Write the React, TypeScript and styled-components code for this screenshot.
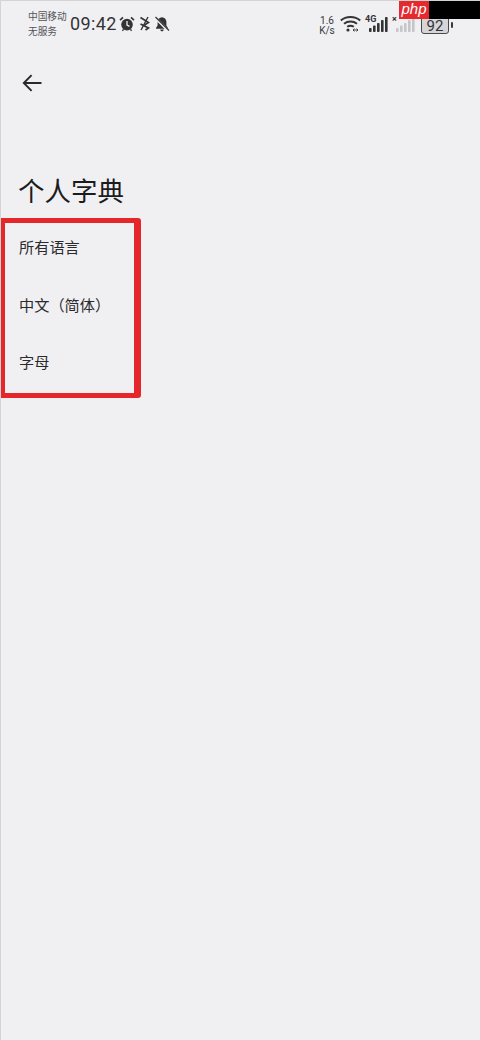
import React from "react";
import styled, { createGlobalStyle } from "styled-components";

const Global = createGlobalStyle`
  html, body { margin: 0; padding: 0; background: #f0f0f3; }
  body { font-family: "Noto Sans CJK SC", "Noto Sans", sans-serif; }
`;

const Page = styled.div`
  position: relative;
  width: 480px;
  height: 1040px;
  box-sizing: border-box;
  background: #f0f0f3;
  border-top: 1px solid #d4d4d6;
  border-left: 1px solid #d4d4d6;
  overflow: hidden;
`;

const StatusBar = styled.div`
  height: 47px;
  display: flex;
  align-items: flex-start;
  padding: 8px 0 0 27px;
  box-sizing: border-box;
  color: #3a3a3c;
`;

const Carrier = styled.div`
  width: 42px;
  font-size: 9.7px;
  line-height: 14.5px;
  color: #55555a;
  white-space: nowrap;
`;

const Clock = styled.div`
  margin-left: 0;
  font-family: "Roboto", sans-serif;
  font-size: 18px;
  line-height: 29px;
  letter-spacing: 0.4px;
  color: #333336;
`;

const LeftIcons = styled.div`
  display: flex;
  align-items: center;
  gap: 4px;
  height: 29px;
  margin-left: 2px;
`;

const RightIcons = styled.div`
  margin-left: auto;
  display: flex;
  align-items: flex-start;
  height: 29px;
  padding: 6px 31px 0 0;
  box-sizing: border-box;
`;

const Speed = styled.div`
  width: 18px;
  margin: 1px 4px 0 0;
  font-family: "Roboto", sans-serif;
  font-size: 10px;
  line-height: 10px;
  text-align: center;
  color: #3a3a3c;
`;

const NetLabel = styled.span`
  position: absolute;
  left: 0;
  top: 0;
  font-family: "Roboto", sans-serif;
  font-size: 9px;
  font-weight: 700;
  line-height: 9px;
  color: #333336;
`;

const Signal = styled.div`
  position: relative;
  width: 23px;
  height: 17px;
  margin-left: 4px;
`;

const BarsSlot = styled.div`
  position: absolute;
  right: 0;
  bottom: 0;
  height: 15px;
`;

const Battery = styled.div`
  position: relative;
  width: 28px;
  height: 19px;
  margin: 0 0 0 6px;
  box-sizing: border-box;
  background: #d6d6d8;
  border: 1.5px solid #4a4a4c;
  border-radius: 3px;
  font-family: "Roboto", sans-serif;
  font-size: 15px;
  line-height: 20px;
  text-align: center;
  color: #333336;
  &::after {
    content: "";
    position: absolute;
    right: -5px;
    top: 6px;
    width: 2px;
    height: 6px;
    border-radius: 1px;
    background: #3a3a3c;
  }
`;

const Watermark = styled.div`
  position: absolute;
  top: -1px;
  right: 0;
  display: flex;
  height: 19px;
`;

const PhpTag = styled.div`
  width: 30px;
  background: #e52a2e;
  color: #fff;
  font-family: "Liberation Sans", sans-serif;
  font-style: italic;
  font-size: 15px;
  line-height: 18px;
  text-align: center;
`;

const BlackTag = styled.div`
  width: 51px;
  background: #000;
`;

const BackRow = styled.div`
  height: 46px;
  display: flex;
  align-items: center;
  padding: 12px 0 0 21px;
`;

const Title = styled.h1`
  margin: 65px 0 0 17px;
  font-size: 26.5px;
  font-weight: 400;
  line-height: 38px;
  color: #1c1c1e;
`;

const Highlight = styled.div`
  width: 141px;
  height: 180px;
  margin-top: 9px;
  margin-left: -1px;
  box-sizing: border-box;
  border: 5px solid #e5262b;
  border-right-width: 7px;
  border-radius: 0 3px 3px 0;
  display: flex;
  flex-direction: column;
  gap: 39.5px;
  padding: 14px 0 0 14px;
`;

const Item = styled.div`
  font-size: 15.2px;
  line-height: 18px;
  color: #2a2a2c;
  white-space: nowrap;
`;

const AlarmIcon = () => (
  <svg width="16" height="16" viewBox="0 0 16 16" fill="#333336">
    <circle cx="8" cy="8.6" r="5.8" />
    <path d="M8 5v4l2.5 1.4" stroke="#f0f0f3" strokeWidth="1.3" fill="none" />
    <path d="M1 4.2 4 1.4M15 4.2 12 1.4" stroke="#333336" strokeWidth="1.6" />
    <path d="M3.4 14.8 4.6 13.4M12.6 14.8 11.4 13.4" stroke="#333336" strokeWidth="1.4" />
  </svg>
);

const BluetoothIcon = () => (
  <svg width="11" height="15" viewBox="0 0 11 15" fill="none" stroke="#333336" strokeWidth="1.7">
    <path d="M1.5 1.5 9.5 6.5 5.5 9M1.5 8l8 4-3 2" />
    <path d="M9 1 2 14" strokeWidth="1.4" />
  </svg>
);

const MutedBellIcon = () => (
  <svg width="16" height="16" viewBox="0 0 16 16" fill="#333336">
    <path d="M8 1.2c-2.8 0-4.4 2.2-4.4 4.8v3.4L2 12v.8h12V12l-1.6-2.6V6c0-2.6-1.6-4.8-4.4-4.8z" />
    <path d="M6.2 13.6h3.6a1.8 1.8 0 0 1-3.6 0z" />
    <path d="M1.5 2 14 14.5" stroke="#f0f0f3" strokeWidth="2.6" />
    <path d="M1.5 1 15 14.5" stroke="#333336" strokeWidth="1.3" />
  </svg>
);

const WifiIcon = () => (
  <svg width="21" height="17" viewBox="0 0 21 17" fill="none" stroke="#333336" strokeWidth="2">
    <path d="M.8 5.5C6 .8 15 .8 20.2 5.5" />
    <path d="M4 8.8c3.8-3 9.2-3 13 0" />
    <path d="M7.2 11.8c2-1.4 4.6-1.4 6.6 0" />
    <circle cx="8" cy="15" r="1.6" fill="#333336" stroke="none" />
    <path d="M13 15h5M14.5 13.6 13 15l1.5 1.4M16.5 13.6 18 15l-1.5 1.4" strokeWidth="0.9" />
  </svg>
);

const Bars = ({ color }: { color: string }) => (
  <svg width="19" height="15" viewBox="0 0 19 15" fill={color} display="block">
    <rect x="0" y="11" width="2.6" height="4" rx="0.8" />
    <rect x="4" y="8.5" width="2.6" height="6.5" rx="0.8" />
    <rect x="8" y="6" width="2.6" height="9" rx="0.8" />
    <rect x="12" y="3" width="2.6" height="12" rx="0.8" />
    <rect x="16" y="0" width="2.6" height="15" rx="0.8" />
  </svg>
);

const BackArrow = () => (
  <svg width="20" height="18" viewBox="0 0 20 18" fill="none" stroke="#2a2a2c" strokeWidth="1.9">
    <path d="M19.5 9H2M9.6 1.2 1.8 9l7.8 7.8" />
  </svg>
);

export default function App() {
  return (
    <Page>
      <Global />
      <StatusBar>
        <Carrier>
          中国移动
          <br />
          无服务
        </Carrier>
        <Clock>09:42</Clock>
        <LeftIcons>
          <AlarmIcon />
          <BluetoothIcon />
          <MutedBellIcon />
        </LeftIcons>
        <RightIcons>
          <Speed>
            1.6
            <br />
            K/s
          </Speed>
          <WifiIcon />
          <Signal>
            <NetLabel>4G</NetLabel>
            <BarsSlot>
              <Bars color="#333336" />
            </BarsSlot>
          </Signal>
          <Signal>
            <NetLabel>×</NetLabel>
            <BarsSlot>
              <Bars color="#c6c6c8" />
            </BarsSlot>
          </Signal>
          <Battery>92</Battery>
        </RightIcons>
      </StatusBar>
      <Watermark>
        <PhpTag>php</PhpTag>
        <BlackTag />
      </Watermark>
      <BackRow>
        <BackArrow />
      </BackRow>
      <Title>个人字典</Title>
      <Highlight>
        <Item>所有语言</Item>
        <Item>中文（简体）</Item>
        <Item>字母</Item>
      </Highlight>
    </Page>
  );
}
